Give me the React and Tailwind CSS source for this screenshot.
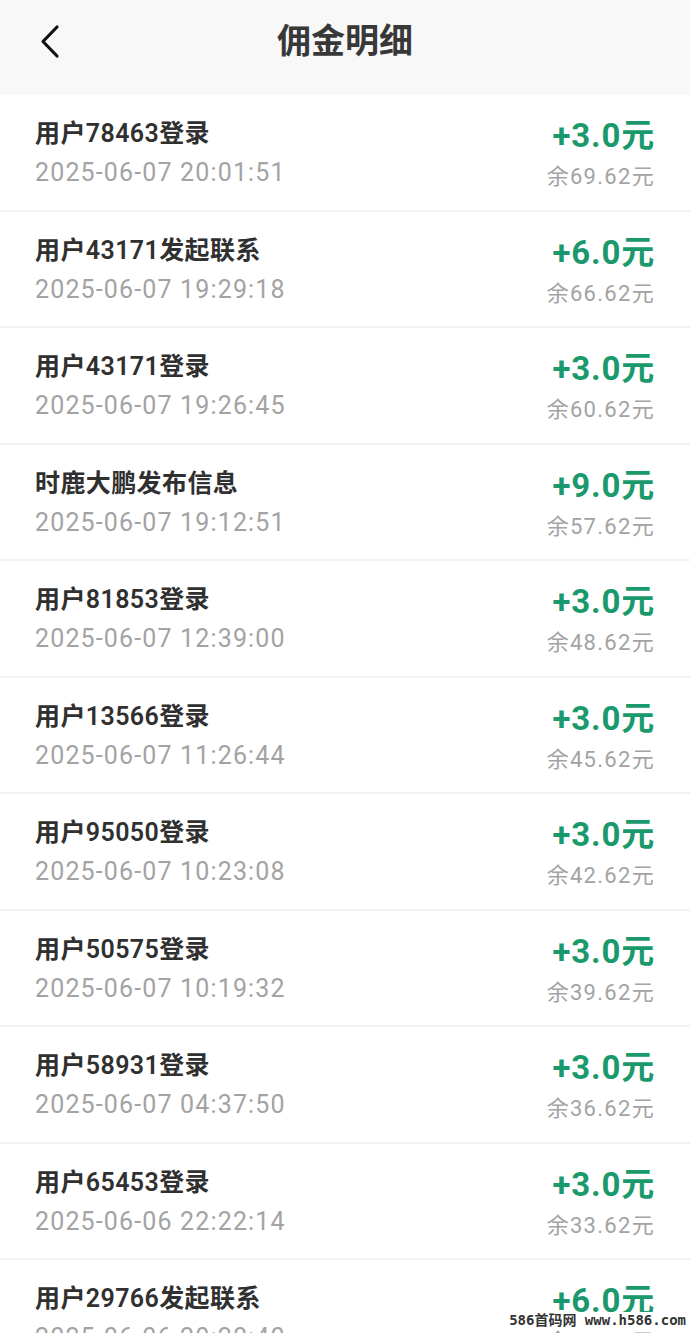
import React from "react";

const rows = [
  ["用户78463登录", "2025-06-07 20:01:51", "+3.0元", "余69.62元"],
  ["用户43171发起联系", "2025-06-07 19:29:18", "+6.0元", "余66.62元"],
  ["用户43171登录", "2025-06-07 19:26:45", "+3.0元", "余60.62元"],
  ["时鹿大鹏发布信息", "2025-06-07 19:12:51", "+9.0元", "余57.62元"],
  ["用户81853登录", "2025-06-07 12:39:00", "+3.0元", "余48.62元"],
  ["用户13566登录", "2025-06-07 11:26:44", "+3.0元", "余45.62元"],
  ["用户95050登录", "2025-06-07 10:23:08", "+3.0元", "余42.62元"],
  ["用户50575登录", "2025-06-07 10:19:32", "+3.0元", "余39.62元"],
  ["用户58931登录", "2025-06-07 04:37:50", "+3.0元", "余36.62元"],
  ["用户65453登录", "2025-06-06 22:22:14", "+3.0元", "余33.62元"],
  ["用户29766发起联系", "2025-06-06 20:20:40", "+6.0元", "余27.62元"],
];

const font = { fontFamily: "Roboto, 'Noto Sans CJK SC', sans-serif" };

export default function App() {
  return (
    <div className="w-[690px] h-[1333px] overflow-hidden bg-white relative" style={font}>
      <div className="h-[95px] bg-[#f8f8f8] flex items-center relative">
        <div className="absolute left-[38px] top-[24px]">
          <svg width="24" height="36" viewBox="0 0 24 36" fill="none">
            <path d="M19 3 L5 17.5 L19 32" stroke="#111" strokeWidth="3.2" strokeLinecap="round" strokeLinejoin="round" />
          </svg>
        </div>
        <div className="w-full text-center text-[34px] font-bold text-[#383838] leading-[40px] -mt-[14px]">佣金明细</div>
      </div>
      {rows.map((r, i) => (
        <div key={i} className="h-[116.5px] border-b-2 border-[#f2f2f2] flex justify-between px-[35px]">
          <div className="flex flex-col pt-[23px]">
            <div className="text-[25px] font-semibold text-[#303030] leading-[32px] tracking-[0.4px]">{r[0]}</div>
            <div className="text-[25px] text-[#a3a3a3] leading-[32px] mt-[7px] tracking-[1.15px]">{r[1]}</div>
          </div>
          <div className="flex flex-col items-end pt-[21px]">
            <div className="text-[33px] font-bold text-[#1a9a6c] leading-[40px] tracking-[0.8px]">{r[2]}</div>
            <div className="text-[22px] text-[#a3a3a3] leading-[30px] mt-[6px] tracking-[1.3px]">{r[3]}</div>
          </div>
        </div>
      ))}
      <div className="absolute right-[2px] bottom-[5px] text-[14px] font-bold text-[#333] leading-[16px] bg-white px-[2px]" style={{ fontFamily: "'DejaVu Sans Mono', 'Noto Sans CJK SC', monospace" }}>
        586首码网 www.h586.com
      </div>
    </div>
  );
}
